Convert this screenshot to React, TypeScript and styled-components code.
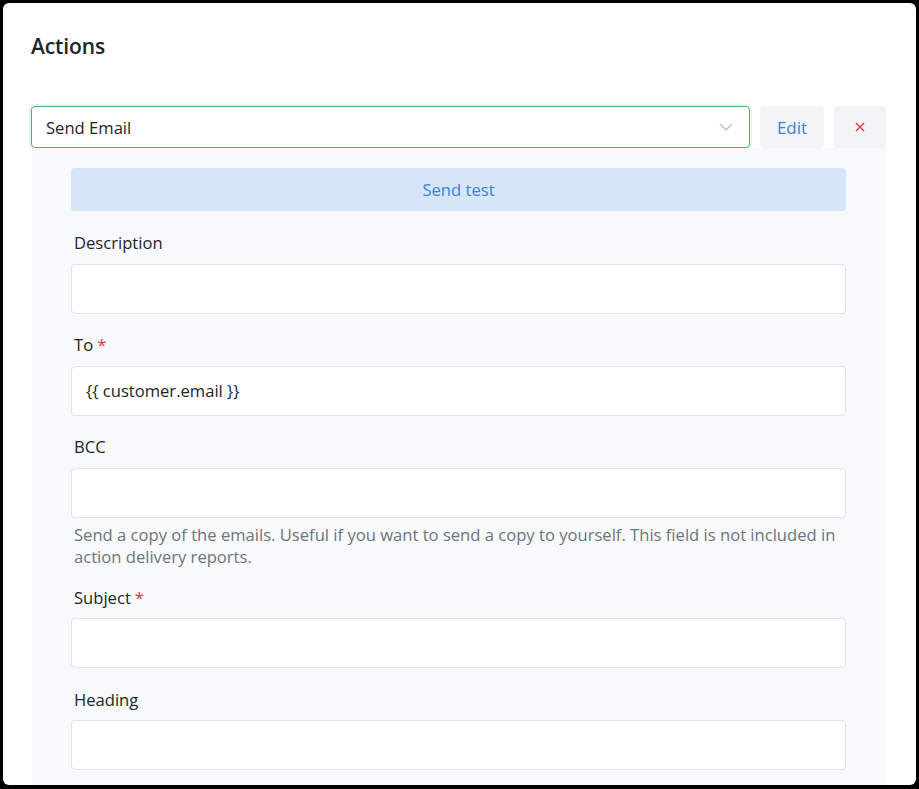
import React from "react";
import styled, { createGlobalStyle } from "styled-components";

const Global = createGlobalStyle`
  html, body { margin: 0; padding: 0; background: #000; }
  body { font-family: "Open Sans", "Noto Sans", sans-serif; }
  * { box-sizing: border-box; }
`;

const Frame = styled.div`
  width: 919px;
  height: 789px;
  background: #000;
  padding: 3px 3px 4px 3px;
`;

const Page = styled.div`
  width: 100%;
  height: 100%;
  background: #fff;
  border-radius: 6px;
  overflow: hidden;
  padding: 30px 30px 0 28px;
  display: flex;
  flex-direction: column;
`;

const Title = styled.h2`
  margin: 0;
  font-size: 21px;
  font-weight: 600;
  line-height: 26px;
  color: #212529;
  letter-spacing: -0.1px;
`;

const ActionRow = styled.div`
  display: flex;
  gap: 10px;
  margin-top: 47px;
  height: 42px;
  flex-shrink: 0;
`;

const Select = styled.div`
  flex: 1;
  display: flex;
  align-items: center;
  justify-content: space-between;
  border: 1px solid #4fb36f;
  box-shadow: 0 0 0 2px rgba(79, 179, 111, 0.12);
  border-radius: 4px;
  padding: 0 16px 0 14px;
  font-size: 16.6px;
  color: #212529;
  background: #fff;
`;

const Btn = styled.button<{ $w: number; $danger?: boolean }>`
  width: ${(p) => p.$w}px;
  border: none;
  border-radius: 4px;
  background: #f2f3f5;
  color: ${(p) => (p.$danger ? "#dc3545" : "#3a83d8")};
  font-family: inherit;
  font-size: 17px;
  display: flex;
  align-items: center;
  justify-content: center;
  padding: 0;
`;

const Panel = styled.div`
  flex: 1;
  background: #f8f9fb;
  margin-left: 1px;
  width: 854px;
  padding: 20px 40px 0 39px;
  display: flex;
  flex-direction: column;
`;

const SendTest = styled.button`
  height: 43px;
  flex-shrink: 0;
  border: none;
  border-radius: 4px;
  background: #d6e6f8;
  color: #3a83d8;
  font-family: inherit;
  font-size: 16.6px;
  margin-bottom: 20px;
`;

const Field = styled.div<{ $gap?: number }>`
  display: flex;
  flex-direction: column;
  margin-bottom: ${(p) => p.$gap ?? 19.5}px;
  flex-shrink: 0;
`;

const Label = styled.label`
  font-size: 16.6px;
  line-height: 24px;
  color: #212529;
  margin: 0 0 8.5px 3px;
`;

const Req = styled.span`
  color: #dc3545;
  margin-left: 4px;
`;

const Input = styled.div`
  height: 50px;
  border: 1px solid #dfe2e6;
  border-radius: 4px;
  background: #fff;
  display: flex;
  align-items: center;
  padding: 0 14px;
  font-size: 16.6px;
  color: #212529;
`;

const Help = styled.div`
  font-size: 16.6px;
  line-height: 22px;
  color: #6c757d;
  margin: 6px 0 0 3px;
`;

const Chevron = () => (
  <svg width="14" height="8" viewBox="0 0 14 8" fill="none">
    <path d="M1 1l6 6 6-6" stroke="#b5b9be" strokeWidth="1.2" />
  </svg>
);

const Cross = () => (
  <svg width="10" height="10" viewBox="0 0 10 10" fill="none">
    <path d="M1 1l8 8M9 1l-8 8" stroke="#dc3545" strokeWidth="1.3" />
  </svg>
);

export default function App() {
  return (
    <>
      <Global />
      <Frame>
        <Page>
          <Title>Actions</Title>
          <ActionRow>
            <Select>
              <span>Send Email</span>
              <Chevron />
            </Select>
            <Btn $w={64}>Edit</Btn>
            <Btn $w={52} $danger aria-label="Remove">
              <Cross />
            </Btn>
          </ActionRow>
          <Panel>
            <SendTest>Send test</SendTest>
            <Field>
              <Label>Description</Label>
              <Input />
            </Field>
            <Field>
              <Label>
                To<Req>*</Req>
              </Label>
              <Input>{"{{ customer.email }}"}</Input>
            </Field>
            <Field $gap={18}>
              <Label>BCC</Label>
              <Input />
              <Help>
                Send a copy of the emails. Useful if you want to send a copy to yourself. This field is not
                included in action delivery reports.
              </Help>
            </Field>
            <Field>
              <Label>
                Subject<Req>*</Req>
              </Label>
              <Input />
            </Field>
            <Field>
              <Label>Heading</Label>
              <Input />
            </Field>
          </Panel>
        </Page>
      </Frame>
    </>
  );
}
